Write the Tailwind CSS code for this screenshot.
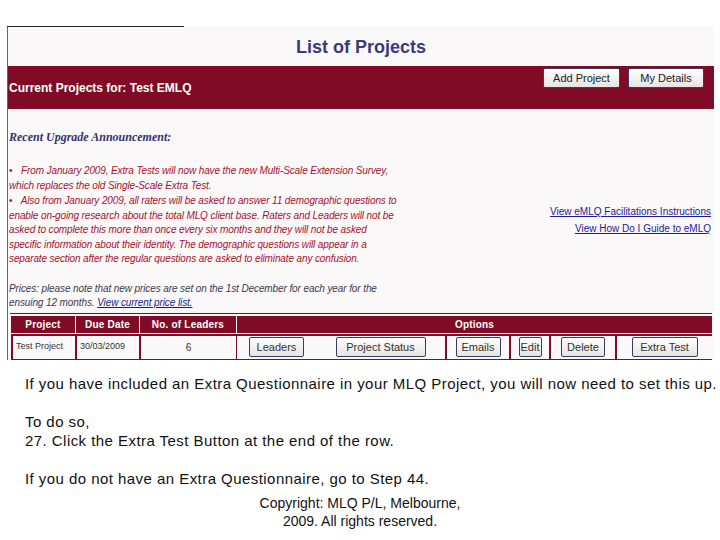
<!DOCTYPE html>
<html lang="en">
<head>
    <meta charset="UTF-8">
    <title>List of Projects</title>
    <script src="https://cdn.jsdelivr.net/npm/@tailwindcss/browser@4"></script>
</head>
<body class="bg-white w-[720px] h-[540px] overflow-hidden font-['Liberation_Sans',Arial,sans-serif]">
    <div class="pt-[26px] pl-[7px] w-[714px]">
        <div class="w-[177px] h-px bg-[#222]"></div>
        <!-- screenshot of the app -->
        <section class="w-[707px] h-[333px] bg-[#fbf8fa] border-l border-[#666] overflow-hidden">
            <h1 class="h-[39px] pt-[7px] text-center text-[18px] leading-[26px] font-bold text-[#3b3a78]">List of Projects</h1>
            <div class="h-[43px] bg-[#7f0b26] flex items-center justify-between pl-px pr-[10px]">
                <span class="text-white font-bold text-[12px]">Current Projects for: Test EMLQ</span>
                <div class="flex gap-[8px] -mt-[19px]">
                    <button class="w-[77px] h-[20px] rounded-[2px] border border-[#3c3a60] bg-gradient-to-b from-white to-[#e6e4e2] text-[11px] text-[#222]">Add Project</button>
                    <button class="w-[76px] h-[20px] rounded-[2px] border border-[#3c3a60] bg-gradient-to-b from-white to-[#e6e4e2] text-[11px] text-[#222]">My Details</button>
                </div>
            </div>
            <div class="flex justify-between pr-[3px]">
                <div class="pl-px whitespace-nowrap">
                    <p class="mt-[20px] font-['Liberation_Serif',serif] italic font-bold text-[12px] leading-[16px] text-[#34326e]">Recent Upgrade Announcement:</p>
                    <div class="mt-[19px] italic text-[10px] tracking-[-0.12px] leading-[14.5px] text-[#a8102c]">
                        <p><span class="not-italic mr-[6px]">•</span> From January 2009, Extra Tests will now have the new Multi-Scale Extension Survey,<br>which replaces the old Single-Scale Extra Test.</p>
                        <p class="mt-px"><span class="not-italic mr-[6px]">•</span> Also from January 2009, all raters will be asked to answer 11 demographic questions to<br>enable on-going research about the total MLQ client base. Raters and Leaders will not be<br>asked to complete this more than once every six months and they will not be asked<br>specific information about their identity. The demographic questions will appear in a<br>separate section after the regular questions are asked to eliminate any confusion.</p>
                    </div>
                    <p class="mt-[15px] italic text-[10px] tracking-[-0.1px] leading-[14.5px] text-[#3a3a50]">Prices: please note that new prices are set on the 1st December for each year for the<br>ensuing 12 months. <a class="text-[#1a1a90] underline">View current price list.</a></p>
                </div>
                <div class="mt-[94px] text-right text-[10px] leading-[17px] text-[#1a1a9a] underline">
                    <p>View eMLQ Facilitations Instructions</p>
                    <p>View How Do I Guide to eMLQ</p>
                </div>
            </div>
            <div class="mt-[2px] ml-[2px] w-[702px] border-t border-[#7f0b26] pt-[2px] pl-px">
                <div class="h-[17px] flex gap-px text-white font-bold text-[10px] tracking-[0.2px] text-center leading-[17px]">
                    <div class="w-[64px] bg-[#7f0b26]">Project</div>
                    <div class="w-[63px] bg-[#7f0b26]">Due Date</div>
                    <div class="w-[96px] bg-[#7f0b26]">No. of Leaders</div>
                    <div class="flex-1 bg-[#7f0b26]">Options</div>
                </div>
                <div class="h-[27px] mt-px flex text-[9px] text-[#333]">
                    <div class="w-[65px] border-2 border-r border-[#7f0b26] flex items-center pl-[3px]">Test Project</div>
                    <div class="w-[64px] border-2 border-x border-[#7f0b26] flex items-center pl-[3px]">30/03/2009</div>
                    <div class="w-[97px] border-2 border-x border-[#7f0b26] flex items-center justify-center text-[10px]">6</div>
                    <div class="w-[79px] flex items-center justify-center border-y-2 border-[#7f0b26]">
                        <button class="w-[55px] h-[20px] rounded-[2px] border border-[#3c3a60] bg-gradient-to-b from-white to-[#e6e4e2] text-[11px]">Leaders</button>
                    </div>
                    <div class="w-[129px] flex items-center justify-center border-y-2 border-[#7f0b26]">
                        <button class="w-[90px] h-[20px] rounded-[2px] border border-[#3c3a60] bg-gradient-to-b from-white to-[#e6e4e2] text-[11px]">Project Status</button>
                    </div>
                    <div class="w-[66px] flex items-center justify-center border-2 border-[#7f0b26]">
                        <button class="w-[45px] h-[20px] rounded-[2px] border border-[#3c3a60] bg-gradient-to-b from-white to-[#e6e4e2] text-[11px]">Emails</button>
                    </div>
                    <div class="w-[40px] flex items-center justify-center border-y-2 border-r-2 border-[#7f0b26]">
                        <button class="w-[23px] h-[20px] rounded-[2px] border border-[#3c3a60] bg-gradient-to-b from-white to-[#e6e4e2] text-[11px]">Edit</button>
                    </div>
                    <div class="w-[66px] flex items-center justify-center border-y-2 border-r-2 border-[#7f0b26]">
                        <button class="w-[44px] h-[20px] rounded-[2px] border border-[#3c3a60] bg-gradient-to-b from-white to-[#e6e4e2] text-[11px]">Delete</button>
                    </div>
                    <div class="flex-1 flex items-center justify-center border-y-2 border-[#7f0b26]">
                        <button class="w-[66px] h-[20px] rounded-[2px] border border-[#3c3a60] bg-gradient-to-b from-white to-[#e6e4e2] text-[11px]">Extra Test</button>
                    </div>
                </div>
            </div>
        </section>
        <section class="ml-[18px] mt-[14px] text-[15px] leading-[19px] text-[#111] whitespace-nowrap tracking-[0.45px]">
            <p>If you have included an Extra Questionnaire in your MLQ Project, you will now need to set this up.</p>
            <p class="mt-[19px]">To do so,</p>
            <p>27. Click the Extra Test Button at the end of the row.</p>
            <p class="mt-[19px]">If you do not have an Extra Questionnaire, go to Step 44.</p>
        </section>
        <footer class="w-[400px] ml-[153px] mt-[6px] text-center text-[14px] leading-[18px] text-[#111]">
            Copyright: MLQ P/L, Melbourne,<br>2009. All rights reserved.
        </footer>
    </div>
</body>
</html>
